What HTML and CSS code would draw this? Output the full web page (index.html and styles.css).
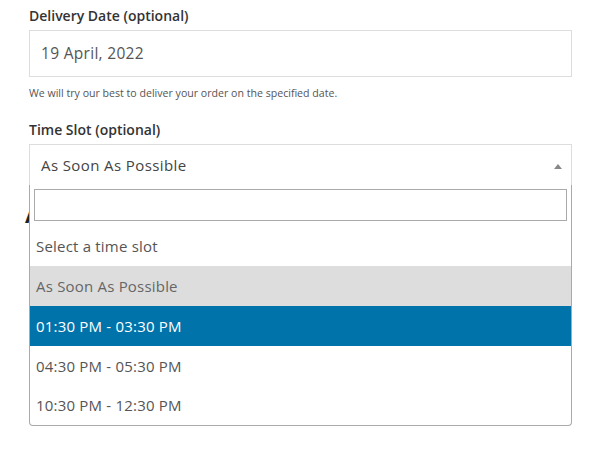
FILE: index.html
```html
<!DOCTYPE html>
<html>
<head>
<meta charset="utf-8">
<link rel="stylesheet" href="styles.css">
</head>
<body>
<div class="form">
  <div class="field">
    <label class="label">Delivery Date (optional)</label>
    <div class="input">19 April, 2022</div>
    <p class="help">We will try our best to deliver your order on the specified date.</p>
  </div>
  <div class="field">
    <label class="label label-slot">Time Slot (optional)</label>
    <div class="select">
      <div class="selection">
        <span class="selection-text">As Soon As Possible</span>
        <span class="arrow"></span>
      </div>
      <div class="dropdown">
        <div class="search-wrap"><div class="search"></div></div>
        <ul class="results">
          <li class="option">Select a time slot</li>
          <li class="option option-hover">As Soon As Possible</li>
          <li class="option option-selected">01:30 PM - 03:30 PM</li>
          <li class="option">04:30 PM - 05:30 PM</li>
          <li class="option option-last">10:30 PM - 12:30 PM</li>
        </ul>
      </div>
    </div>
  </div>
  <h3 class="hidden-heading">Additional information</h3>
</div>
</body>
</html>
```
FILE: styles.css
```css
* { box-sizing: border-box; }
html, body { margin: 0; padding: 0; background: #fff; }
body {
  font-family: "Open Sans", "Liberation Sans", sans-serif;
  color: #555;
  width: 606px;
  height: 452px;
  overflow: hidden;
}
.form {
  padding: 6px 0 0 29px;
  width: 572px;
}
.label {
  display: block;
  font-size: 14px;
  font-weight: 600;
  color: #333;
  line-height: 20px;
  margin-bottom: 4px;
}
.input {
  height: 47px;
  border: 1px solid #ddd;
  padding: 0 11px;
  font-size: 15.5px;
  letter-spacing: 0.3px;
  line-height: 45px;
  color: #555;
}
.help {
  margin: 9px 0 0;
  font-size: 10.6px;
  line-height: 14px;
  color: #555;
}
.label-slot { margin-top: 20px; margin-bottom: 4px; }
.select { position: relative; }
.selection {
  height: 41px;
  border: 1px solid #ddd;
  border-bottom: none;
  display: flex;
  align-items: center;
  justify-content: space-between;
  padding: 0 9px 0 11px;
}
.selection-text {
  font-size: 15px;
  letter-spacing: 0.4px;
  color: #444;
}
.arrow {
  width: 0; height: 0;
  border-left: 4px solid transparent;
  border-right: 4px solid transparent;
  border-bottom: 5px solid #888;
  margin-top: 2px;
}
.dropdown {
  position: absolute;
  top: 41px;
  left: 0;
  right: 0;
  background: #fff;
  border: 1px solid #aaa;
  border-top: none;
  border-radius: 0 0 4px 4px;
  z-index: 5;
}
.search-wrap { padding: 4px 4px 5px; }
.search {
  height: 32px;
  border: 1px solid #aaa;
}
.results {
  list-style: none;
  margin: 0;
  padding: 0;
}
.option {
  height: 40px;
  line-height: 40px;
  padding: 0 6px;
  font-size: 15px;
  letter-spacing: 0.2px;
  color: #555;
}
.option-last { height: 39px; line-height: 39px; }
.option-hover { background: #ddd; color: #666; }
.option-selected { background: #0073aa; color: #fff; }
.hidden-heading {
  margin: 14px 0 0 -4px;
  font-size: 22px;
  color: #222;
}
```
